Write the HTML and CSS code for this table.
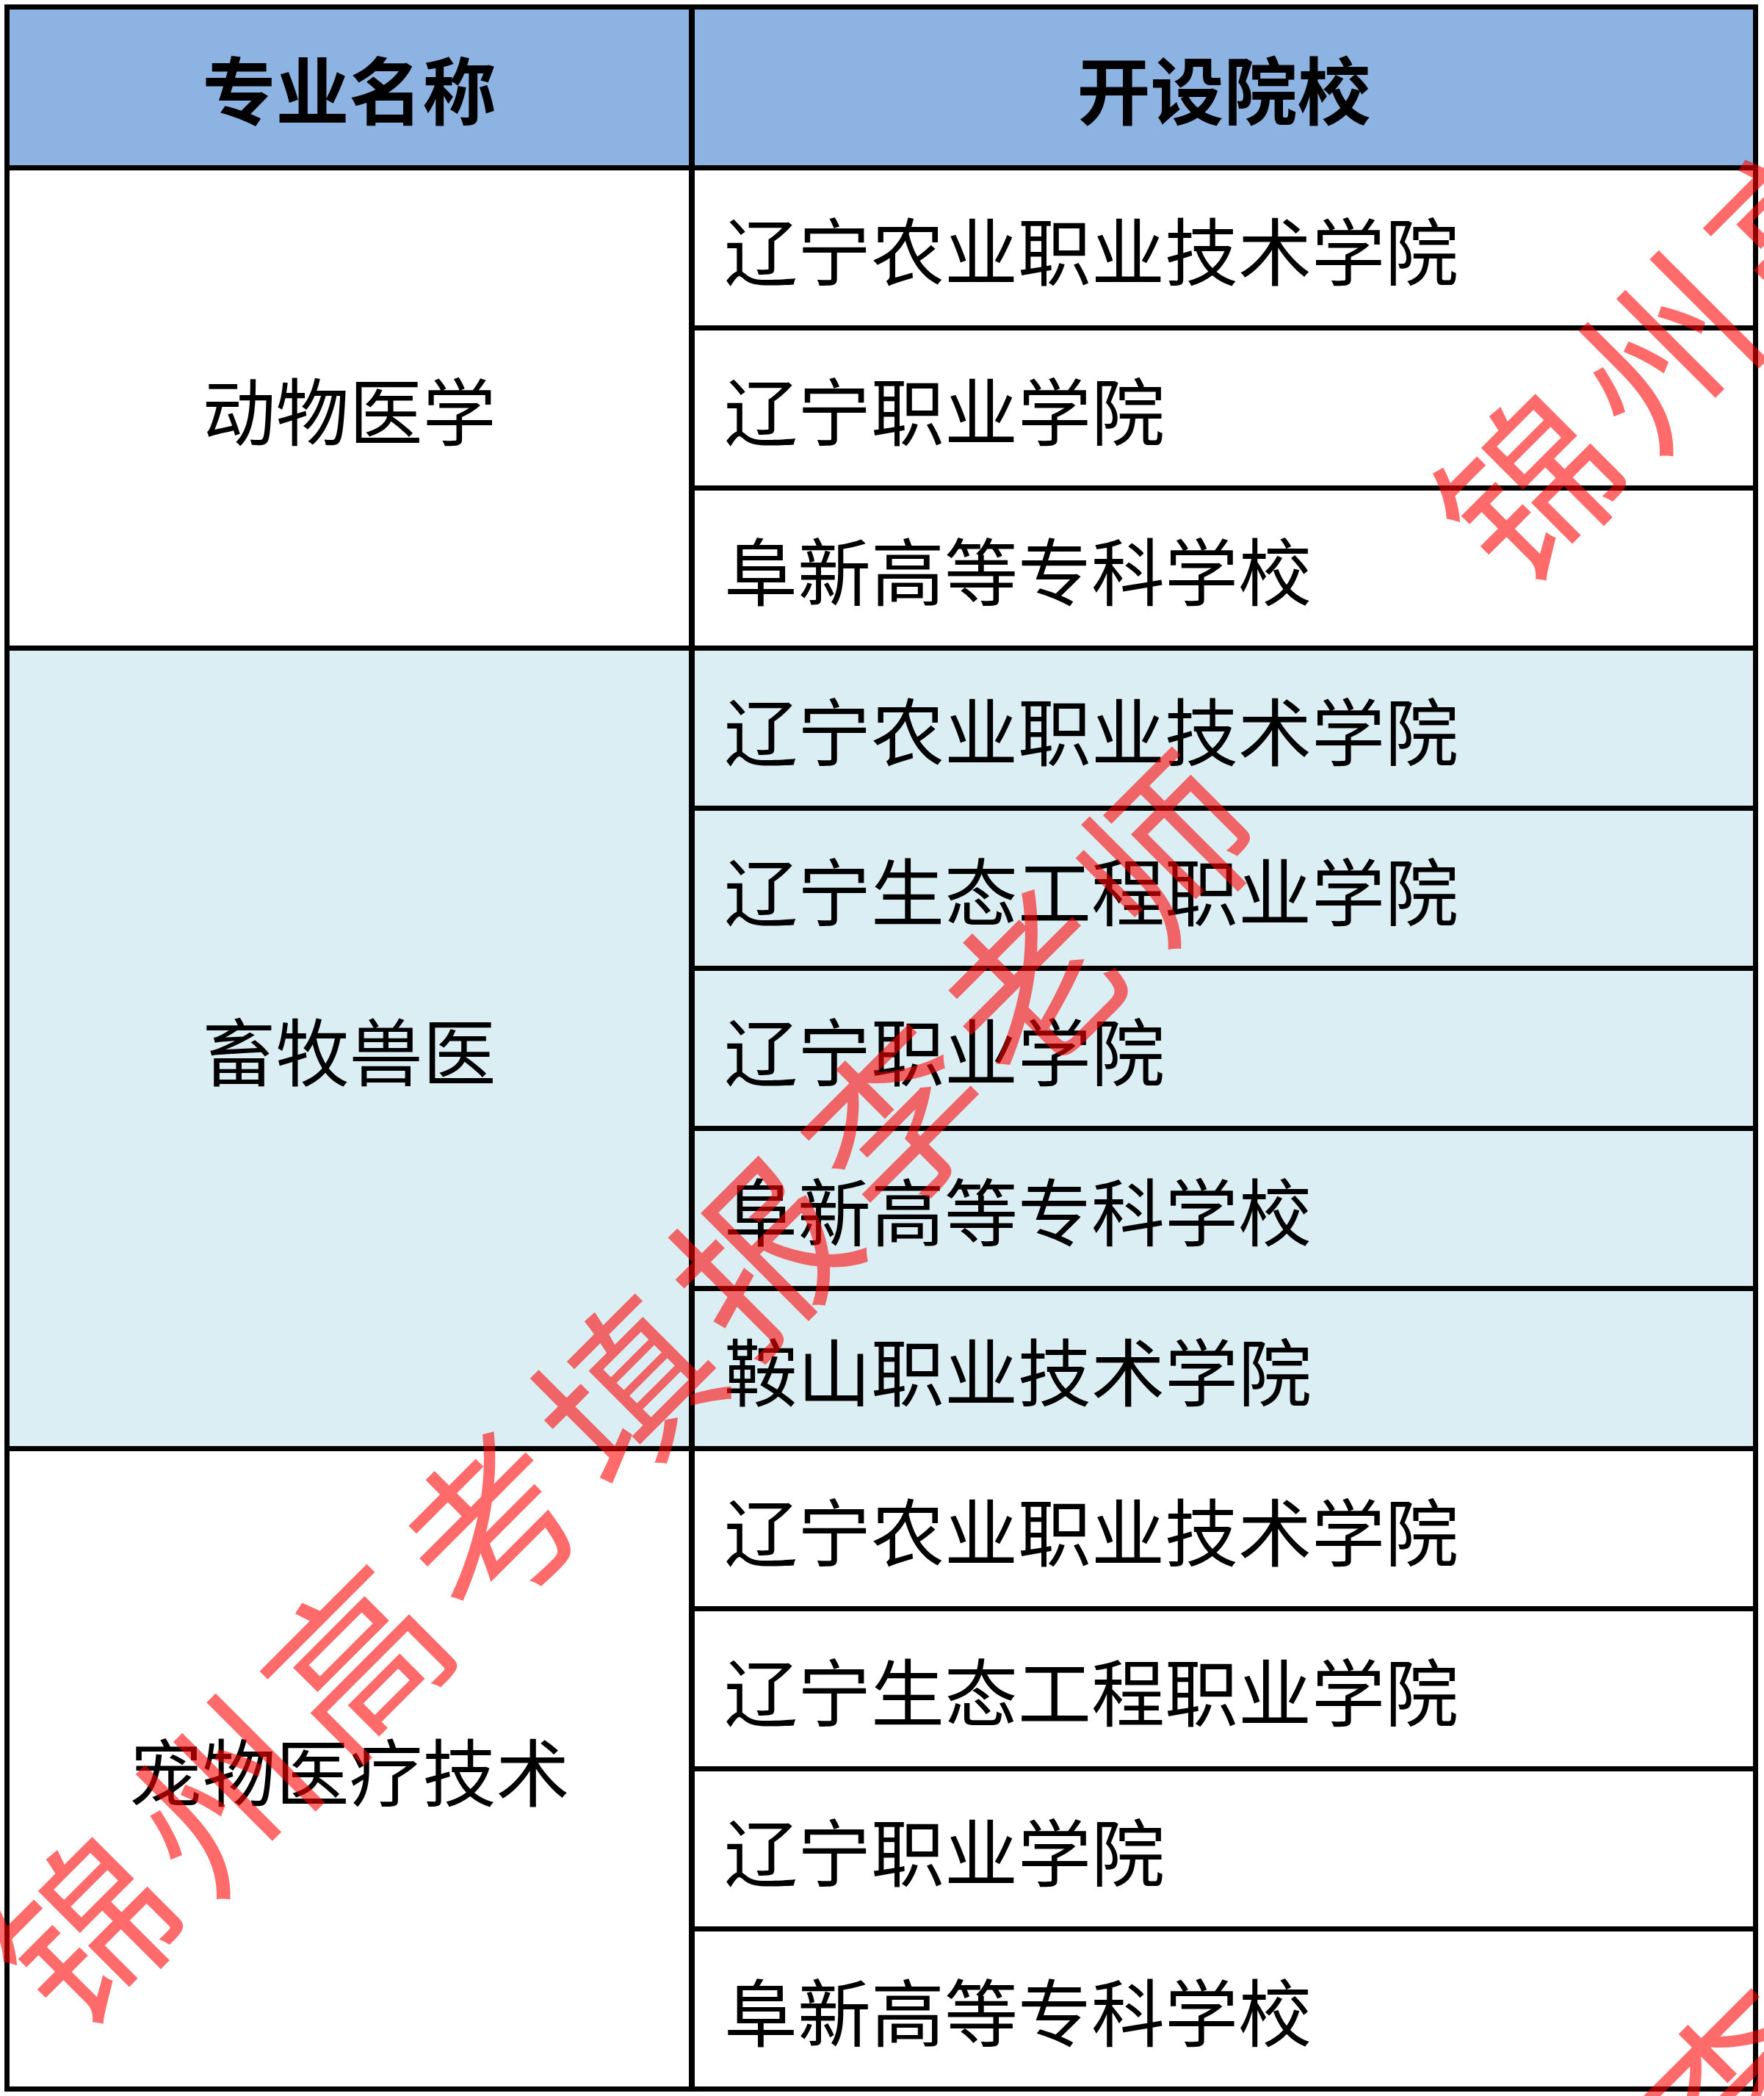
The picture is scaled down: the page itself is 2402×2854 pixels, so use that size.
FILE: index.html
```html
<!DOCTYPE html>
<html lang="zh-CN">
<head>
<meta charset="utf-8">
<title>专业名称 开设院校</title>
<link rel="stylesheet" href="styles.css">
</head>
<body>
<div class="page">
  <div class="table">
    <div class="row head">
      <div class="major">专业名称</div>
      <div class="schools"><div class="school center">开设院校</div></div>
    </div>
    <div class="row group">
      <div class="major">动物医学</div>
      <div class="schools">
        <div class="school">辽宁农业职业技术学院</div>
        <div class="school">辽宁职业学院</div>
        <div class="school">阜新高等专科学校</div>
      </div>
    </div>
    <div class="row group tint">
      <div class="major">畜牧兽医</div>
      <div class="schools">
        <div class="school">辽宁农业职业技术学院</div>
        <div class="school">辽宁生态工程职业学院</div>
        <div class="school">辽宁职业学院</div>
        <div class="school">阜新高等专科学校</div>
        <div class="school">鞍山职业技术学院</div>
      </div>
    </div>
    <div class="row group">
      <div class="major">宠物医疗技术</div>
      <div class="schools">
        <div class="school">辽宁农业职业技术学院</div>
        <div class="school">辽宁生态工程职业学院</div>
        <div class="school">辽宁职业学院</div>
        <div class="school">阜新高等专科学校</div>
      </div>
    </div>
  </div>
  <svg class="watermark" width="2402" height="2854" viewBox="0 0 2402 2854" aria-hidden="true">
    <g transform="translate(109 2620) rotate(-45)">
      <text class="wm" x="0 260 520 780 1040 1300 1560 1820 2080" y="0">锦州高考填报李老师</text>
      <text class="wm" x="2779 3039 3299 3559 3819 4079 4339 4599 4859" y="0">锦州高考填报李老师</text>
      <text class="wm" x="-117 143 403 663 923 1183 1443 1703 1963" y="1740">锦州高考填报李老师</text>
    </g>
  </svg>
</div>
</body>
</html>
```

FILE: styles.css
```css
html, body {
  margin: 0;
  padding: 0;
  background: #ffffff;
}

.page {
  position: relative;
  width: 2402px;
  height: 2854px;
  overflow: hidden;
  font-family: "Noto Sans CJK SC", "Noto Sans", sans-serif;
  color: #000;
}

.table {
  box-sizing: border-box;
  margin: 6px 0 0 6px;
  width: 2388px;
  border: 7px solid #000;
  display: flex;
  flex-direction: column;
  background: #fff;
}

.row {
  display: flex;
}

.group {
  border-top: 7px solid #000;
}

.head {
  background: #8db3e2;
  font-weight: 700;
}

.head .school {
  height: 212px;
}

.head .major {
  height: 212px;
}

.tint {
  background: #daeef3;
}

.major {
  width: 925px;
  flex: none;
  border-right: 8px solid #000;
  display: flex;
  align-items: center;
  justify-content: center;
  font-size: 100px;
  line-height: 1;
}

.schools {
  flex: 1;
  display: flex;
  flex-direction: column;
}

.school {
  height: 211px;
  display: flex;
  align-items: center;
  padding-left: 40px;
  font-size: 100px;
  line-height: 1;
}

.school + .school {
  border-top: 7px solid #000;
}

.school.center {
  justify-content: center;
  padding-left: 0;
}

.watermark {
  position: absolute;
  left: 0;
  top: 0;
  pointer-events: none;
}

.wm {
  font-family: "Noto Sans CJK SC", sans-serif;
  font-size: 235px;
  font-weight: 400;
  fill: #ff0000;
  fill-opacity: 0.58;
  text-anchor: middle;
  dominant-baseline: central;
}
```
